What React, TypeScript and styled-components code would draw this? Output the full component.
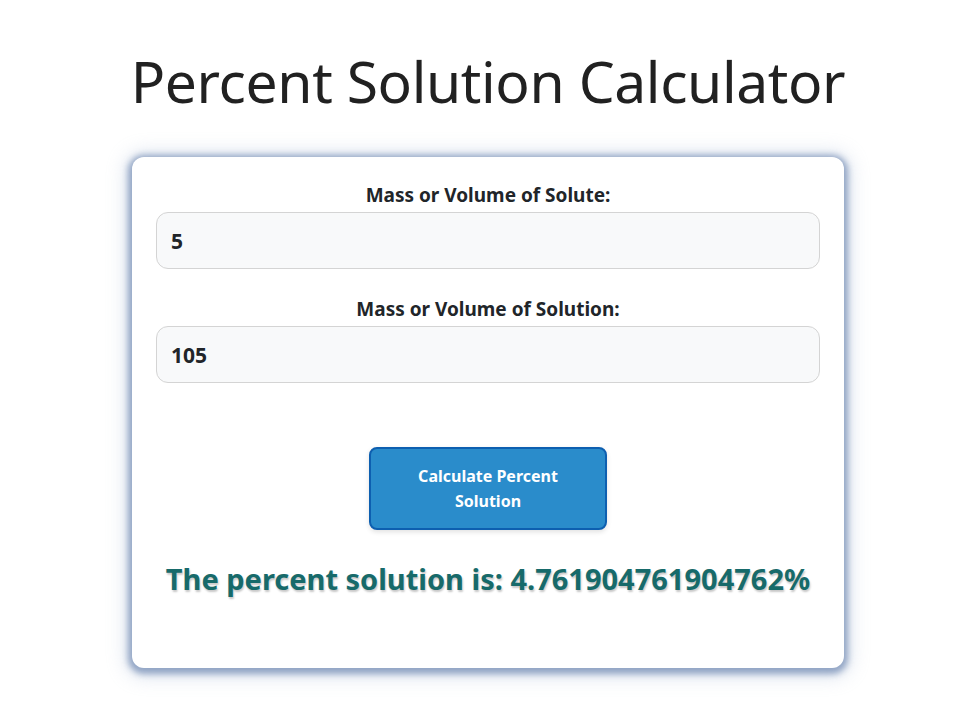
import React, { useState } from 'react'
import styled, { createGlobalStyle } from 'styled-components'

const GlobalStyle = createGlobalStyle`
  body {
    margin: 0;
    background: #ffffff;
    font-family: 'Noto Sans', 'Open Sans', sans-serif;
    color: #212529;
  }
`

const Page = styled.main`
  display: flex;
  flex-direction: column;
  align-items: center;
  padding: 47px 0 40px;
`

const Title = styled.h1`
  margin: 0 0 42px;
  font-size: 57px;
  font-weight: 400;
  line-height: 1.2;
  color: #212121;
  letter-spacing: -0.4px;
`

const Card = styled.section`
  box-sizing: border-box;
  width: 712px;
  min-height: 511px;
  padding: 25px 24px 40px;
  background: #fff;
  border-radius: 12px;
  box-shadow: 0 2px 6px 4px rgba(118, 142, 182, 0.75), 0 2px 18px 8px rgba(160, 180, 210, 0.3);
`

const Field = styled.div`
  display: flex;
  flex-direction: column;
  margin-bottom: 27px;
`

const Label = styled.label`
  text-align: center;
  font-size: 19px;
  font-weight: 700;
  margin-bottom: 4px;
  color: #212529;
`

const Input = styled.input`
  box-sizing: border-box;
  height: 57px;
  padding: 0 14px;
  border: 1px solid #d4d4d4;
  border-radius: 12px;
  background: #f8f9fa;
  font-family: inherit;
  font-size: 21px;
  font-weight: 700;
  color: #212529;
  outline: none;
`

const Actions = styled.div`
  display: flex;
  justify-content: center;
  margin-top: 64px;
`

const Button = styled.button`
  width: 238px;
  height: 83px;
  padding: 0 40px;
  border: 2px solid #0d5fb0;
  border-radius: 8px;
  background: #2a8ccb;
  color: #fff;
  font-family: inherit;
  font-size: 16px;
  font-weight: 700;
  line-height: 1.55;
  box-shadow: 0 2px 5px rgba(0, 0, 0, 0.12);
  cursor: pointer;
`

const Result = styled.p`
  margin: 29px 0 0;
  text-align: center;
  font-size: 29px;
  font-weight: 700;
  color: #176a6a;
  text-shadow: 1px 2px 2px rgba(0, 0, 0, 0.22);
`

export default function App() {
  const [solute, setSolute] = useState('5')
  const [solution, setSolution] = useState('105')
  const [result, setResult] = useState<number | null>((5 / 105) * 100)

  const calculate = () => {
    const a = parseFloat(solute)
    const b = parseFloat(solution)
    if (!isNaN(a) && !isNaN(b) && b !== 0) setResult((a / b) * 100)
  }

  return (
    <Page>
      <GlobalStyle />
      <Title>Percent Solution Calculator</Title>
      <Card>
        <Field>
          <Label htmlFor="solute">Mass or Volume of Solute:</Label>
          <Input id="solute" value={solute} onChange={e => setSolute(e.target.value)} />
        </Field>
        <Field>
          <Label htmlFor="solution">Mass or Volume of Solution:</Label>
          <Input id="solution" value={solution} onChange={e => setSolution(e.target.value)} />
        </Field>
        <Actions>
          <Button onClick={calculate}>Calculate Percent Solution</Button>
        </Actions>
        {result !== null && <Result>The percent solution is: {result}%</Result>}
      </Card>
    </Page>
  )
}
